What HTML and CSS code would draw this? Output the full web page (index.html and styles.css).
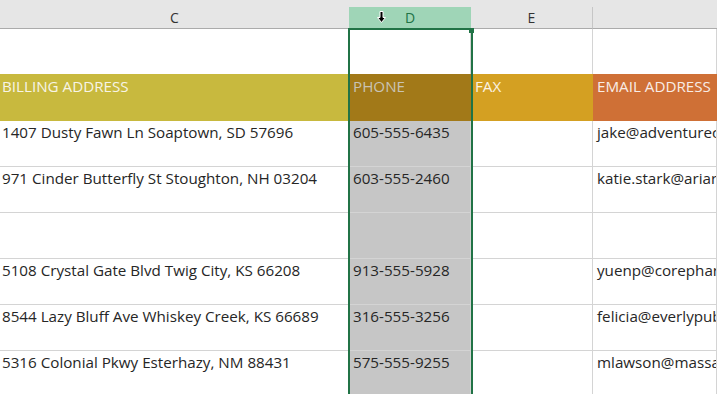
FILE: index.html
```html
<!DOCTYPE html>
<html>
<head>
<meta charset="utf-8">
<link rel="stylesheet" href="styles.css">
</head>
<body>
<div class="sheet">
  <div class="grid">
    <div class="hd">C</div>
    <div class="hd hd-sel">
      <svg class="cursor" width="9" height="12" viewBox="0 0 9 12"><path d="M3 0.5 H6 V6.5 H8.5 L4.5 11.5 L0.5 6.5 H3 Z" fill="#000" stroke="#fff" stroke-width="1"/></svg>
      <span>D</span>
    </div>
    <div class="hd hd-e">E</div>
    <div class="hd"></div>

    <div class="c r1"></div><div class="c r1 d-first"></div><div class="c r1 bl"></div><div class="c r1 bl"></div>

    <div class="c band b-bill">BILLING ADDRESS</div>
    <div class="c band b-phone">PHONE</div>
    <div class="c band b-fax">FAX</div>
    <div class="c band b-email">EMAIL ADDRESS</div>

    <div class="c">1407 Dusty Fawn Ln Soaptown, SD 57696</div>
    <div class="c d">605-555-6435</div>
    <div class="c"></div>
    <div class="c">jake@adventureconsulting.com</div>

    <div class="c">971 Cinder Butterfly St Stoughton, NH 03204</div>
    <div class="c d">603-555-2460</div>
    <div class="c"></div>
    <div class="c">katie.stark@ariaresources.com</div>

    <div class="c"></div>
    <div class="c d"></div>
    <div class="c"></div>
    <div class="c"></div>

    <div class="c">5108 Crystal Gate Blvd Twig City, KS 66208</div>
    <div class="c d">913-555-5928</div>
    <div class="c"></div>
    <div class="c">yuenp@corepharmaceuticals.com</div>

    <div class="c">8544 Lazy Bluff Ave Whiskey Creek, KS 66689</div>
    <div class="c d">316-555-3256</div>
    <div class="c"></div>
    <div class="c">felicia@everlypublishing.com</div>

    <div class="c">5316 Colonial Pkwy Esterhazy, NM 88431</div>
    <div class="c d">575-555-9255</div>
    <div class="c"></div>
    <div class="c">mlawson@massachusettsco.com</div>
  </div>
  <div class="selection"><div class="handle"></div></div>
</div>
</body>
</html>
```

FILE: styles.css
```css
html, body {
  margin: 0;
  padding: 0;
  background: #ffffff;
  overflow: hidden;
}

.sheet {
  position: relative;
  width: 717px;
  height: 394px;
  overflow: hidden;
  font-family: "Open Sans", "Noto Sans", sans-serif;
  color: #262626;
  background: #e6e6e6;
}

.grid {
  display: grid;
  grid-template-columns: 349px 122px 122px 124px;
  grid-template-rows: 29px 45px 47px repeat(6, 46px);
}

.hd {
  margin-top: 7px;
  background: #e6e6e6;
  border-bottom: 1px solid #ababab;
  display: flex;
  align-items: center;
  justify-content: center;
  font-size: 14px;
  color: #333;
  line-height: 20px;
}

.hd-e {
  border-right: 1px solid #c6c6c6;
  box-sizing: border-box;
}

.hd-sel {
  background: #9fd5b7;
  color: #217346;
  position: relative;
}

.cursor {
  position: absolute;
  left: 28px;
  top: 4px;
}

.c {
  background: #ffffff;
  box-sizing: border-box;
  border-right: 1px solid #d4d4d4;
  border-bottom: 1px solid #d4d4d4;
  font-size: 15.2px;
  line-height: 20px;
  padding: 1px 0 0 4px;
  white-space: nowrap;
  overflow: hidden;
}

.grid > .c:nth-child(4n+5) {
  padding-left: 2px;
}

.r1 {
  border-bottom: none;
}

.band {
  border: none;
  padding-top: 2px;
  color: #f7f4e6;
}

.b-bill { background: #c8b93e; padding-left: 2px; }
.b-phone { background: #a27918; color: #c9c3b4; }
.b-fax { background: #d4a022; color: #fbf3e2; }
.b-email { background: #cf7036; color: #f8ece6; }

.d {
  background: #c6c6c6;
}

.selection {
  position: absolute;
  left: 348px;
  top: 28px;
  width: 125px;
  height: 380px;
  box-sizing: border-box;
  border: 2px solid #217346;
}

.handle {
  position: absolute;
  right: -3px;
  top: -2px;
  width: 5px;
  height: 5px;
  background: #217346;
}
```
